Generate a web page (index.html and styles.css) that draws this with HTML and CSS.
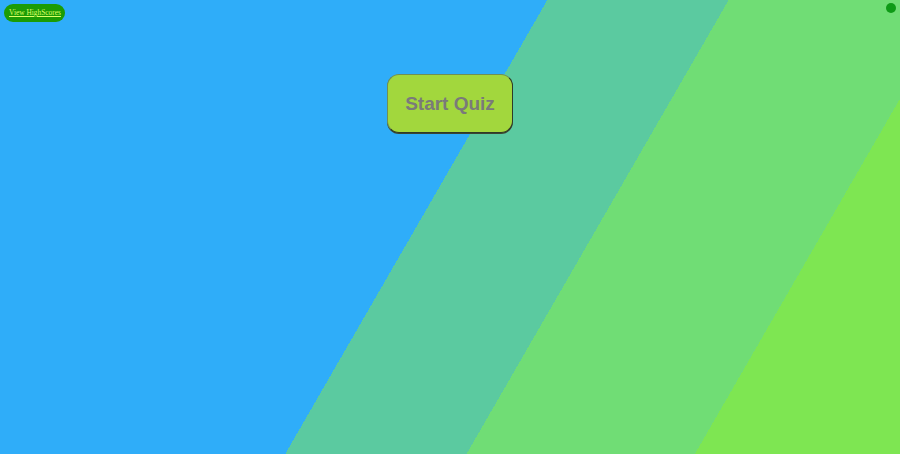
FILE: index.html
```html
<!DOCTYPE html>
<html>
<head>
<meta charset="utf-8">
<link rel="stylesheet" href="styles.css">
</head>
<body>
<header class="top">
  <a class="scores" href="#">View HighScores</a>
  <span class="dot"></span>
</header>
<main class="stage">
  <button class="start">Start Quiz</button>
</main>
</body>
</html>
```
FILE: styles.css
```css
html, body {
  margin: 0;
  padding: 0;
  height: 100%;
}
body {
  width: 900px;
  height: 454px;
  overflow: hidden;
  background: linear-gradient(120deg,
    #2fadf9 0 47.1%,
    #5bcaa0 47.1% 62.7%,
    #70dd75 62.7% 82.35%,
    #7ee652 82.35% 100%);
  font-family: "Liberation Serif", serif;
}
.top {
  display: flex;
  justify-content: space-between;
  align-items: flex-start;
  padding: 4px 4px 0 4px;
}
.scores {
  display: block;
  height: 18px;
  line-height: 18px;
  padding: 0 5px;
  width: 51px;
  background: #1c9c05;
  border-radius: 9px;
  color: #dcff66;
  font-size: 7.4px;
  white-space: nowrap;
  text-decoration: underline;
}
.dot {
  width: 10px;
  height: 10px;
  margin-top: -1px;
  border-radius: 50%;
  background: #0e9a16;
}
.stage {
  display: flex;
  justify-content: center;
  padding-top: 52px;
}
.start {
  width: 126px;
  height: 59px;
  box-sizing: border-box;
  background: #a2d73d;
  border: 1px solid #6f8f55;
  border-bottom-color: #2f3a28;
  border-right-color: #2f3a28;
  box-shadow: 0 1px 0 #3b4532;
  border-radius: 12px;
  font-family: "Liberation Sans", Arial, sans-serif;
  font-weight: bold;
  font-size: 19px;
  color: #7a7a7a;
  padding: 0;
}
```
